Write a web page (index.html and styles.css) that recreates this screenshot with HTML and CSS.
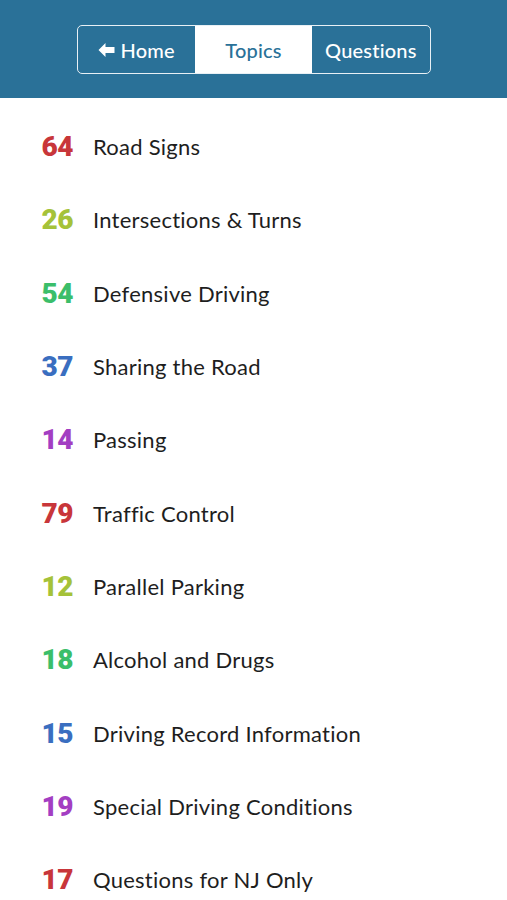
FILE: index.html
```html
<!DOCTYPE html>
<html>
<head>
<meta charset="utf-8">
<link rel="stylesheet" href="styles.css">
</head>
<body>
<header class="topbar">
  <nav class="seg">
    <a class="seg-item"><svg class="arrow" viewBox="0 0 16 14" width="17" height="14"><path d="M0 7 L7 0 L7 4 L16 4 L16 10 L7 10 L7 14 Z" fill="#fff"/></svg>Home</a>
    <a class="seg-item active">Topics</a>
    <a class="seg-item">Questions</a>
  </nav>
</header>
<ul class="topics">
  <li class="topic"><span class="num red">64</span><span class="name">Road Signs</span></li>
  <li class="topic"><span class="num lime">26</span><span class="name">Intersections &amp; Turns</span></li>
  <li class="topic"><span class="num green">54</span><span class="name">Defensive Driving</span></li>
  <li class="topic"><span class="num blue">37</span><span class="name">Sharing the Road</span></li>
  <li class="topic"><span class="num purple">14</span><span class="name">Passing</span></li>
  <li class="topic"><span class="num red">79</span><span class="name">Traffic Control</span></li>
  <li class="topic"><span class="num lime">12</span><span class="name">Parallel Parking</span></li>
  <li class="topic"><span class="num green">18</span><span class="name">Alcohol and Drugs</span></li>
  <li class="topic"><span class="num blue">15</span><span class="name">Driving Record Information</span></li>
  <li class="topic"><span class="num purple">19</span><span class="name">Special Driving Conditions</span></li>
  <li class="topic"><span class="num red">17</span><span class="name">Questions for NJ Only</span></li>
</ul>
</body>
</html>
```

FILE: styles.css
```css
* { box-sizing: border-box; }
html, body { margin: 0; padding: 0; background: #fff; }
body { font-family: "Lato", "Open Sans", sans-serif; width: 507px; overflow: hidden; }

.topbar {
  height: 98px;
  background: #2a7198;
  display: flex;
  justify-content: center;
  padding-top: 25px;
}
.seg {
  display: flex;
  height: 49px;
  width: 354px;
  border: 1.5px solid #e8f0f5;
  border-radius: 5px;
  overflow: hidden;
}
.seg-item {
  flex: 1;
  display: flex;
  align-items: center;
  justify-content: center;
  gap: 6px;
  color: #fff;
  font-size: 20px;
  font-weight: 500;
  letter-spacing: 0.2px;
}
.seg-item.active { background: #fff; color: #2a7198; }
.arrow { margin-top: 1px; }

.topics {
  list-style: none;
  margin: 0;
  padding: 12px 0 0 0;
}
.topic {
  height: 73.3px;
  display: flex;
  align-items: center;
}
.num {
  width: 74px;
  text-align: right;
  font-family: "Roboto", sans-serif;
  font-weight: 900;
  font-size: 28px;
  letter-spacing: -0.5px;
  padding-right: 1px;
}
.name {
  margin-left: 19px;
  font-size: 22px;
  color: #1e1e1e;
  letter-spacing: 0.25px;
}
.red { color: #c8363a; }
.lime { color: #a5c239; }
.green { color: #3bbe6a; }
.blue { color: #3a6ec0; }
.purple { color: #a33ec2; }
```
